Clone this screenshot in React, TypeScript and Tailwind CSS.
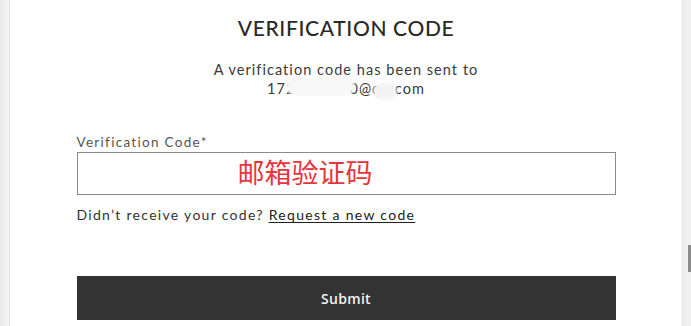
import React from "react";

export default function App() {
  return (
    <div className="w-[691px] h-[326px] flex bg-white overflow-hidden" style={{ fontFamily: "Lato, 'Open Sans', sans-serif" }}>
      <div className="w-[10px] shrink-0 bg-gradient-to-r from-[#eaeaea] to-[#f5f5f5] border-r border-[#e2e2e2]" />
      <main className="flex-1 flex flex-col items-center">
        <div className="w-[539px] flex flex-col">
          <h1 className="pt-[14px] text-[21px] leading-[28px] text-center text-[#2a2a2a] tracking-[0.65px] font-medium">
            VERIFICATION CODE
          </h1>
          <p className="mt-[18px] text-[14.5px] leading-[19px] text-center text-[#3a3a3a] tracking-[1.05px]">
            A verification code has been sent to
          </p>
          <p className="text-[14.5px] leading-[19px] text-center text-[#3a3a3a] tracking-[1.05px]">
            <span className="relative inline-block">
              172<span className="inline-block w-[54px]" />0@qq.com
              <span className="absolute left-[19px] top-[-3px] w-[69px] h-[20px] rounded-[10px] bg-[#f8f8f8] blur-[1.5px]" />
              <span className="absolute left-[106px] top-[4px] w-[24px] h-[17px] rounded-[9px] bg-[#f4f4f4] blur-[1.5px]" />
            </span>
          </p>
          <label className="mt-[35px] text-[13.5px] leading-[18px] text-[#555] tracking-[1.3px]">
            Verification Code*
          </label>
          <div className="relative mt-[1px] h-[43px] border border-[#8a8a8a] bg-white">
            <span
              className="absolute left-[160px] top-[3px] text-[27px] leading-[32px] text-[#e8343c]"
              style={{ fontFamily: "'Noto Sans CJK SC', sans-serif" }}
            >
              邮箱验证码
            </span>
          </div>
          <p className="mt-[10px] text-[14px] leading-[20px] text-[#333] tracking-[1.3px]">
            Didn’t receive your code?{" "}
            <a className="underline underline-offset-2 text-[#222]">Request a new code</a>
          </p>
          <button
            className="mt-[51px] h-[44px] bg-[#333333] text-[#f2f2f2] text-[14px] font-semibold tracking-[0.3px]"
            style={{ fontFamily: "'Open Sans', sans-serif" }}
          >
            Submit
          </button>
        </div>
      </main>
      <div className="relative w-[9px] shrink-0 bg-[#f0f0f0] border-l border-[#e4e4e4]">
        <div className="absolute right-0 top-[245px] w-[3px] h-[27px] bg-[#8c8c8c]" />
      </div>
    </div>
  );
}
